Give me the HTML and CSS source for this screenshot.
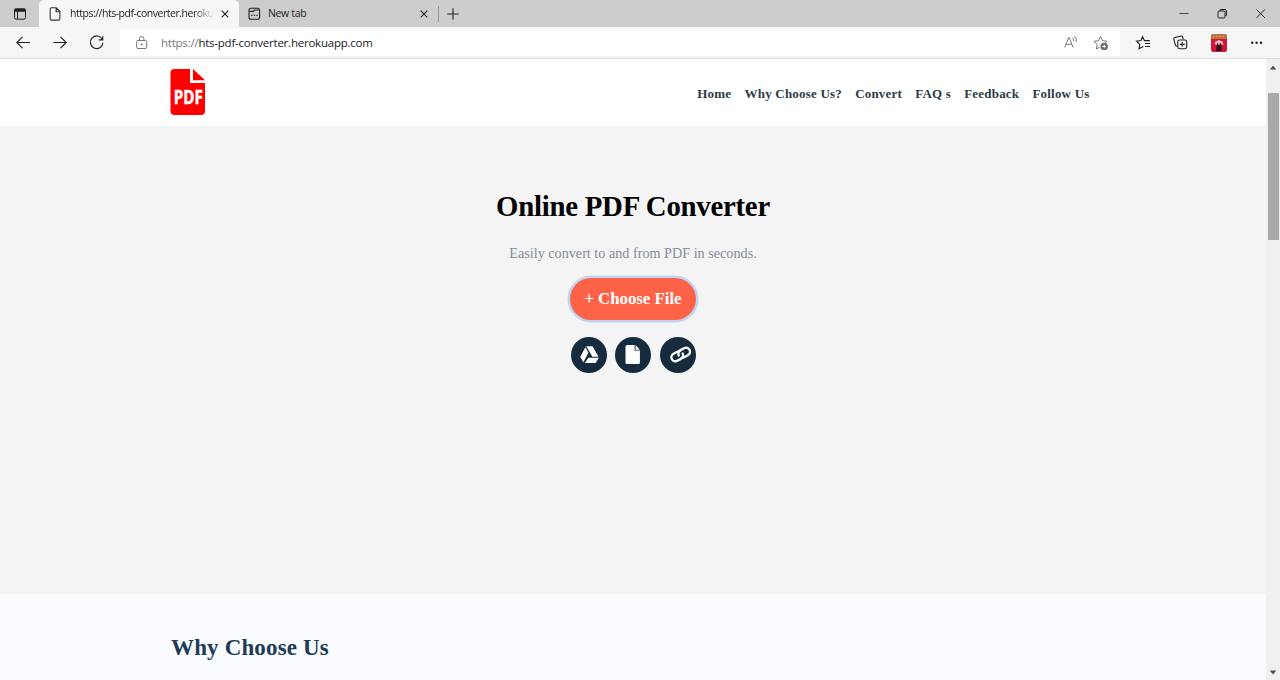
FILE: index.html
```html
<!DOCTYPE html>
<html lang="en">
<head>
<meta charset="utf-8">
<title>Online PDF Converter</title>
<link rel="stylesheet" href="styles.css">
</head>
<body>
<div class="tabs">
  <div class="tab-actions">
    <svg width="14" height="14" viewBox="0 0 14 14" fill="none" stroke="#222"><rect x="1.5" y="1.8" width="11" height="10.4" rx="1.6"/><path d="M1.5 3.3h11" stroke-width="3"/><path d="M4.5 4v8"/></svg>
  </div>
  <div class="tab active">
    <svg class="tab-icon" width="14" height="16" viewBox="0 0 14 16" fill="none" stroke="#333" stroke-width="1.1"><path d="M3.5 1.8h4.8l3.6 3.7v7.3a1.3 1.3 0 0 1-1.3 1.3H3.5a1.3 1.3 0 0 1-1.3-1.3V3.1a1.3 1.3 0 0 1 1.3-1.3zM8.1 2v3.7h3.6"/></svg>
    <span class="tab-title fade">https://hts-pdf-converter.heroku</span>
    <svg class="close" width="10" height="10" viewBox="0 0 10 10" stroke="#222" stroke-width="1.1"><path d="M1.7 1.7l6.6 6.6M8.3 1.7L1.7 8.3"/></svg>
  </div>
  <div class="tab">
    <svg class="tab-icon" width="14" height="14" viewBox="0 0 14 14" fill="none" stroke="#222" stroke-width="1.1"><rect x="1" y="1.2" width="10.600" height="11" rx="2"/><path d="M1.200 4.400h4.200L6.600 3h4.700M3 8.300h1.600M5.600 8.300h1.600M8.200 8.300h1.600"/></svg>
    <span class="tab-title">New tab</span>
    <svg class="close" width="10" height="10" viewBox="0 0 10 10" stroke="#222" stroke-width="1.1"><path d="M1.7 1.7l6.6 6.6M8.3 1.7L1.7 8.3"/></svg>
  </div>
  <div class="divider"></div>
  <svg class="new-tab" width="14" height="14" viewBox="0 0 14 14" stroke="#222" stroke-width="1.1"><path d="M7 1.2v11.6M1.2 7h11.6"/></svg>
  <div class="window-buttons">
    <svg width="12" height="12" viewBox="0 0 12 12" stroke="#444"><path d="M1.5 5.500h9"/></svg>
    <svg width="12" height="12" viewBox="0 0 12 12" fill="none" stroke="#222"><rect x="2" y="3" width="7" height="7" rx="1"/><path d="M4.200 2.800V1.500h4.700a1.5 1.5 0 0 1 1.5 1.500v4.700H9.200"/></svg>
    <svg width="12" height="12" viewBox="0 0 12 12" stroke="#222"><path d="M2.500 1.500l8.400 8.400M10.900 1.500L2.500 9.900"/></svg>
  </div>
</div>

<div class="toolbar">
  <div class="nav-buttons">
    <svg width="16" height="16" viewBox="0 0 16 16" fill="none" stroke="#222" stroke-width="1.1"><path d="M15 7.500H2M7.500 1.800L1.800 7.500l5.700 5.700"/></svg>
    <svg width="16" height="16" viewBox="0 0 16 16" fill="none" stroke="#222" stroke-width="1.100"><path d="M1.300 7.500H14M8.500 1.800l5.700 5.700-5.700 5.700"/></svg>
    <svg width="16" height="16" viewBox="0 0 16 16" fill="none" stroke="#222" stroke-width="1.200"><path d="M13.400 4.500A6.300 6.300 0 1 0 14 7.800M13.700 1.200v3.700h-3.900"/></svg>
  </div>
  <div class="address">
    <svg class="lock" width="12" height="14" viewBox="0 0 12 14" fill="none" stroke="#777"><rect x=".7" y="4.500" width="10" height="8" rx="1.300"/><path d="M3.500 4.500V2.700a2.200 2.200 0 0 1 4.400 0v1.800"/><circle cx="5.700" cy="8.500" r=".6" fill="#777"/></svg>
    <span class="url"><span class="scheme">https://</span>hts-pdf-converter.herokuapp.com</span>
    <svg class="read" width="16" height="16" viewBox="0 0 16 16" fill="none" stroke="#777"><path d="M1.700 12.500l4-10h.4l4 10M3 9.300h5.800M9.300 2.700q1.500 1.300 1.300 3.300M11.300 1.300q2.600 2 2.200 5.500"/></svg>
    <svg class="star" width="16" height="16" viewBox="0 0 16 16" fill="none" stroke="#777"><path d="M6.500 12.200L3.400 14l.7-4.500L1 6.300l4.500-.7L7.500 1.500l2 4.100 4.500.7-2 2"/><circle cx="11.200" cy="11.400" r="3.700" fill="#666" stroke="none"/><path d="M11.200 9.400v4M9.200 11.400h4" stroke="#fff"/></svg>
  </div>
  <div class="tools">
    <svg width="16" height="16" viewBox="0 0 16 16" fill="none" stroke="#222" stroke-width="1.100"><path d="M8.300 11.500L4 13.800l.8-4.300-3.200-3.300 4.400-.6 1.500-3.900 1.900 3.900h5.500M10 8.500h5M10 11.500h5"/></svg>
    <svg width="16" height="16" viewBox="0 0 16 16" fill="none" stroke="#222" stroke-width="1.100"><rect x="4.800" y="5" width="8.900" height="8.700" rx="1.600"/><path d="M9.200 7v4.800M6.800 9.400h4.900M4.200 11.200l-1.700-.8L.8 4.100q-.2-1.300 1-1.600L8.100 1q1.200-.2 1.600 1l.5 2.300"/></svg>
    <svg width="16" height="18" viewBox="0 0 16 18"><rect width="16" height="18" rx="2.500" fill="#cf1438"/><path d="M0 5V2.500A2.500 2.500 0 0 1 2.500 0h11A2.500 2.500 0 0 1 16 2.500V5H0z" fill="#bd7040"/><path d="M2 2.500h12" stroke="#d99c58" stroke-dasharray="2 1"/><path d="M3.500 10l1-2.500L8 6l3.500 1.500 1 3.500-2-.5L8 9l-2.500 2z" fill="#f2b7bb"/><path d="M6 9h4l1 8H5z" fill="#351020"/><circle cx="8" cy="9.500" r="1.200" fill="#e7bd9c"/></svg>
    <svg width="14" height="16" viewBox="0 0 14 16" fill="#222"><circle cx="3.200" cy="7.700" r="1.200"/><circle cx="7.600" cy="7.700" r="1.200"/><circle cx="12" cy="7.700" r="1.200"/></svg>
  </div>
</div>

<div class="viewport">
  <div class="page">
    <header class="site-header">
      <svg class="logo" width="36" height="47" viewBox="0 0 36 47"><path fill="#f00" d="M4.500 0H20v14h15v28a4 4 0 0 1-4 4H4.500a4 4 0 0 1-4-4V4a4 4 0 0 1 4-4z"/><path fill="#f00" d="M23 0l12 11.300H23z"/><text class="logo-text" x="3.700" y="34.500" textLength="29" lengthAdjust="spacingAndGlyphs">PDF</text></svg>
      <nav class="menu"><a>Home</a><a>Why Choose Us?</a><a>Convert</a><a>FAQ s</a><a>Feedback</a><a>Follow Us</a></nav>
    </header>
    <main class="hero">
      <h1>Online PDF Converter</h1>
      <p>Easily convert to and from PDF in seconds.</p>
      <button class="choose"><span class="plus">+</span> Choose File</button>
      <div class="sources">
        <span class="source"><svg width="36" height="36" viewBox="0 0 36 36" fill="#fff"><path d="M15.200 9.300h6.300l6 10.500h-6.100zM14.400 10.300l3 5.500-5 9.400-3.200-5.200zM17.300 20.700h10.500L24.700 26H13.900z"/></svg></span>
        <span class="source"><svg width="36" height="36" viewBox="0 0 36 36" fill="#fff"><path d="M12 8h7.600v5.500h5.300v12a1.500 1.500 0 0 1-1.500 1.500H12a1.500 1.500 0 0 1-1.500-1.500v-16A1.500 1.500 0 0 1 12 8zM20.500 8l4.400 4.700h-4.400z"/></svg></span>
        <span class="source"><svg width="36" height="36" viewBox="0 0 36 36" fill="none" stroke="#fff" stroke-width="2.300" stroke-linecap="round"><g transform="translate(20.700 17.500) rotate(-28)"><path d="M.5-3.200A4 4 0 0 0-1.800-4H-6a4 4 0 0 0 0 8h4.200A4 4 0 0 0 2.200 0"/><path d="M-.5 3.200A4 4 0 0 0 1.800 4H6a4 4 0 0 0 0-8H1.800A4 4 0 0 0-2.200 0"/></g></svg></span>
      </div>
    </main>
    <section class="why"><h2>Why Choose Us</h2></section>
  </div>
  <div class="scrollbar">
    <svg width="8" height="5" viewBox="0 0 8 5"><path d="M4 .5L7.300 4.500H.7z" fill="#505050"/></svg>
    <div class="thumb"></div>
    <svg class="down" width="8" height="5" viewBox="0 0 8 5"><path d="M4 4.500L.7.500h6.600z" fill="#505050"/></svg>
  </div>
</div>
</body>
</html>
```
FILE: styles.css
```css
* { box-sizing: border-box; }
body { margin: 0; height: 680px; overflow: hidden; display: flex; flex-direction: column; background: #fff; font-family: "Liberation Serif", serif; }
svg { display: block; flex: none; overflow: visible; }

.tabs { height: 27px; flex: none; display: flex; align-items: center; background: #cdcdcd; font: 10.500px/15px "Open Sans", sans-serif; color: #222; }
.tab-actions { width: 39px; height: 27px; display: flex; align-items: center; padding-left: 13px; }
.tab { width: 199px; height: 27px; display: flex; align-items: center; padding: 0 9px 0 9px; }
.tab.active { width: 200px; background: #f7f7f7; border-radius: 5px 5px 0 0; }
.tab-title { flex: 1; white-space: nowrap; margin: -1px 6px 0 6px; letter-spacing: -.35px; }
.active .tab-title { margin-left: 8px; letter-spacing: -.48px; }
.fade { -webkit-mask-image: linear-gradient(to right, #000 86%, transparent); mask-image: linear-gradient(to right, #000 86%, transparent); }
.divider { width: 1px; height: 16px; background: #999; }
.new-tab { margin-left: 7px; }
.window-buttons { margin-left: auto; padding-right: 14px; display: flex; gap: 26px; }

.toolbar { height: 32px; flex: none; display: flex; align-items: center; background: #f6f6f6; border-bottom: 1px solid #ddd; }
.nav-buttons { width: 120px; display: flex; gap: 21px; padding-left: 15px; }
.address { width: 1000px; height: 27px; display: flex; align-items: center; background: #fff; border-radius: 3px; padding: 0 11px 0 16px; font: 11.500px "Open Sans", sans-serif; color: #222; }
.url { margin-left: 13px; letter-spacing: -.23px; white-space: nowrap; }
.scheme { color: #777; }
.read { margin-left: auto; }
.star { margin-left: 14px; }
.tools { flex: 1; display: flex; align-items: center; justify-content: space-between; padding: 0 17px 0 15px; }

.viewport { flex: 1; min-height: 0; display: flex; }
.page { width: 1266px; display: flex; flex-direction: column; }
.site-header { height: 67px; flex: none; display: flex; justify-content: space-between; align-items: flex-start; padding: 10px 176.500px 0 170px; background: #fff; }
.logo-text { font: bold 19px "Open Sans", sans-serif; fill: #fff; stroke: #fff; stroke-width: .5px; }
.menu { display: flex; gap: 13.200px; margin-top: 17px; font-size: 13px; line-height: 15px; font-weight: bold; letter-spacing: .2px; color: #2c3b47; }
.hero { height: 468px; flex: none; display: flex; flex-direction: column; align-items: center; background: #f4f4f4; padding-top: 63px; }
.hero h1 { margin: 0; font-size: 28.800px; line-height: 34px; letter-spacing: -.25px; color: #000; }
.hero p { margin: 22px 0 0; font-size: 14.200px; line-height: 17px; color: #858d9b; }
.choose { margin-top: 16px; width: 126px; height: 42px; padding: 0; border: 0; border-radius: 21px; background: #ff6347; box-shadow: 0 0 0 2.500px #bfd3f5; color: #fff; font: bold 16.800px "Liberation Serif", serif; }
.plus { font-weight: normal; -webkit-text-stroke: .3px #fff; }
.sources { margin-top: 17px; display: flex; gap: 8.500px; }
.source { width: 36px; height: 36px; border-radius: 50%; background: #162b3d; }
.why { flex: 1; background: #fafbff; padding: 40px 171px 0; }
.why h2 { margin: 0; font-size: 23px; line-height: 28px; letter-spacing: .15px; color: #203b54; }

.scrollbar { width: 14px; background: #f0f0f0; display: flex; flex-direction: column; align-items: center; padding: 6px 0 5px; }
.thumb { width: 11px; height: 147px; margin-top: 23px; background: #a9a9a9; }
.down { margin-top: auto; }
```
